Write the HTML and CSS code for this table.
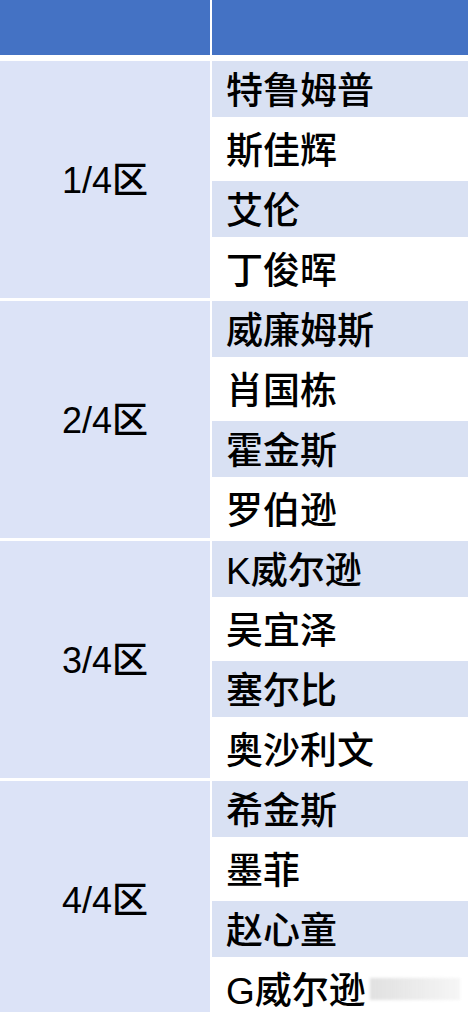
FILE: index.html
```html
<!DOCTYPE html>
<html lang="zh-CN">
<head>
<meta charset="utf-8">
<title>分区</title>
<link rel="stylesheet" href="styles.css">
</head>
<body>
<div class="table">
  <div class="head">
    <div class="hcell"></div>
    <div class="hcell"></div>
  </div>
  <div class="group">
    <div class="zone">1/4区</div>
    <div class="names">
      <div class="name shade">特鲁姆普</div>
      <div class="name">斯佳辉</div>
      <div class="name shade">艾伦</div>
      <div class="name">丁俊晖</div>
    </div>
  </div>
  <div class="group">
    <div class="zone">2/4区</div>
    <div class="names">
      <div class="name shade">威廉姆斯</div>
      <div class="name">肖国栋</div>
      <div class="name shade">霍金斯</div>
      <div class="name">罗伯逊</div>
    </div>
  </div>
  <div class="group">
    <div class="zone">3/4区</div>
    <div class="names">
      <div class="name shade">K威尔逊</div>
      <div class="name">吴宜泽</div>
      <div class="name shade">塞尔比</div>
      <div class="name">奥沙利文</div>
    </div>
  </div>
  <div class="group">
    <div class="zone">4/4区</div>
    <div class="names">
      <div class="name shade">希金斯</div>
      <div class="name">墨菲</div>
      <div class="name shade">赵心童</div>
      <div class="name">G威尔逊</div>
    </div>
  </div>
</div>
<div class="watermark"></div>
</body>
</html>
```

FILE: styles.css
```css
html, body {
  margin: 0;
  padding: 0;
  background: #ffffff;
}

body {
  width: 468px;
  height: 1012px;
  overflow: hidden;
  position: relative;
  font-family: "Liberation Sans", "Noto Sans CJK SC", sans-serif;
  color: #000;
}

.table {
  display: flex;
  flex-direction: column;
}

.head {
  display: grid;
  grid-template-columns: 210px 1fr;
  column-gap: 2px;
  height: 55px;
  margin-bottom: 6px;
}

.hcell {
  background: #4472c4;
}

.group {
  display: grid;
  grid-template-columns: 210px 1fr;
  column-gap: 2px;
  height: 240px;
  flex-shrink: 0;
}

.zone {
  background: #dce3f7;
  margin-bottom: 3px;
  display: flex;
  align-items: center;
  justify-content: center;
  box-sizing: border-box;
  padding-bottom: 5px;
  font-size: 36px;
  font-weight: 500;
}

.names {
  display: flex;
  flex-direction: column;
}

.name {
  height: 60px;
  flex-shrink: 0;
  box-sizing: border-box;
  border-bottom: 4px solid #ffffff;
  background-clip: padding-box;
  display: flex;
  align-items: center;
  padding-left: 14px;
  padding-bottom: 3px;
  font-size: 37px;
  font-weight: 500;
  white-space: nowrap;
}

.shade {
  background-color: #d9e1f3;
}

.watermark {
  position: absolute;
  left: 370px;
  top: 978px;
  width: 90px;
  height: 22px;
  background: linear-gradient(90deg, rgba(200,200,200,0.55), rgba(215,215,215,0.45) 60%, rgba(225,225,225,0.3));
  filter: blur(1.5px);
}
```
